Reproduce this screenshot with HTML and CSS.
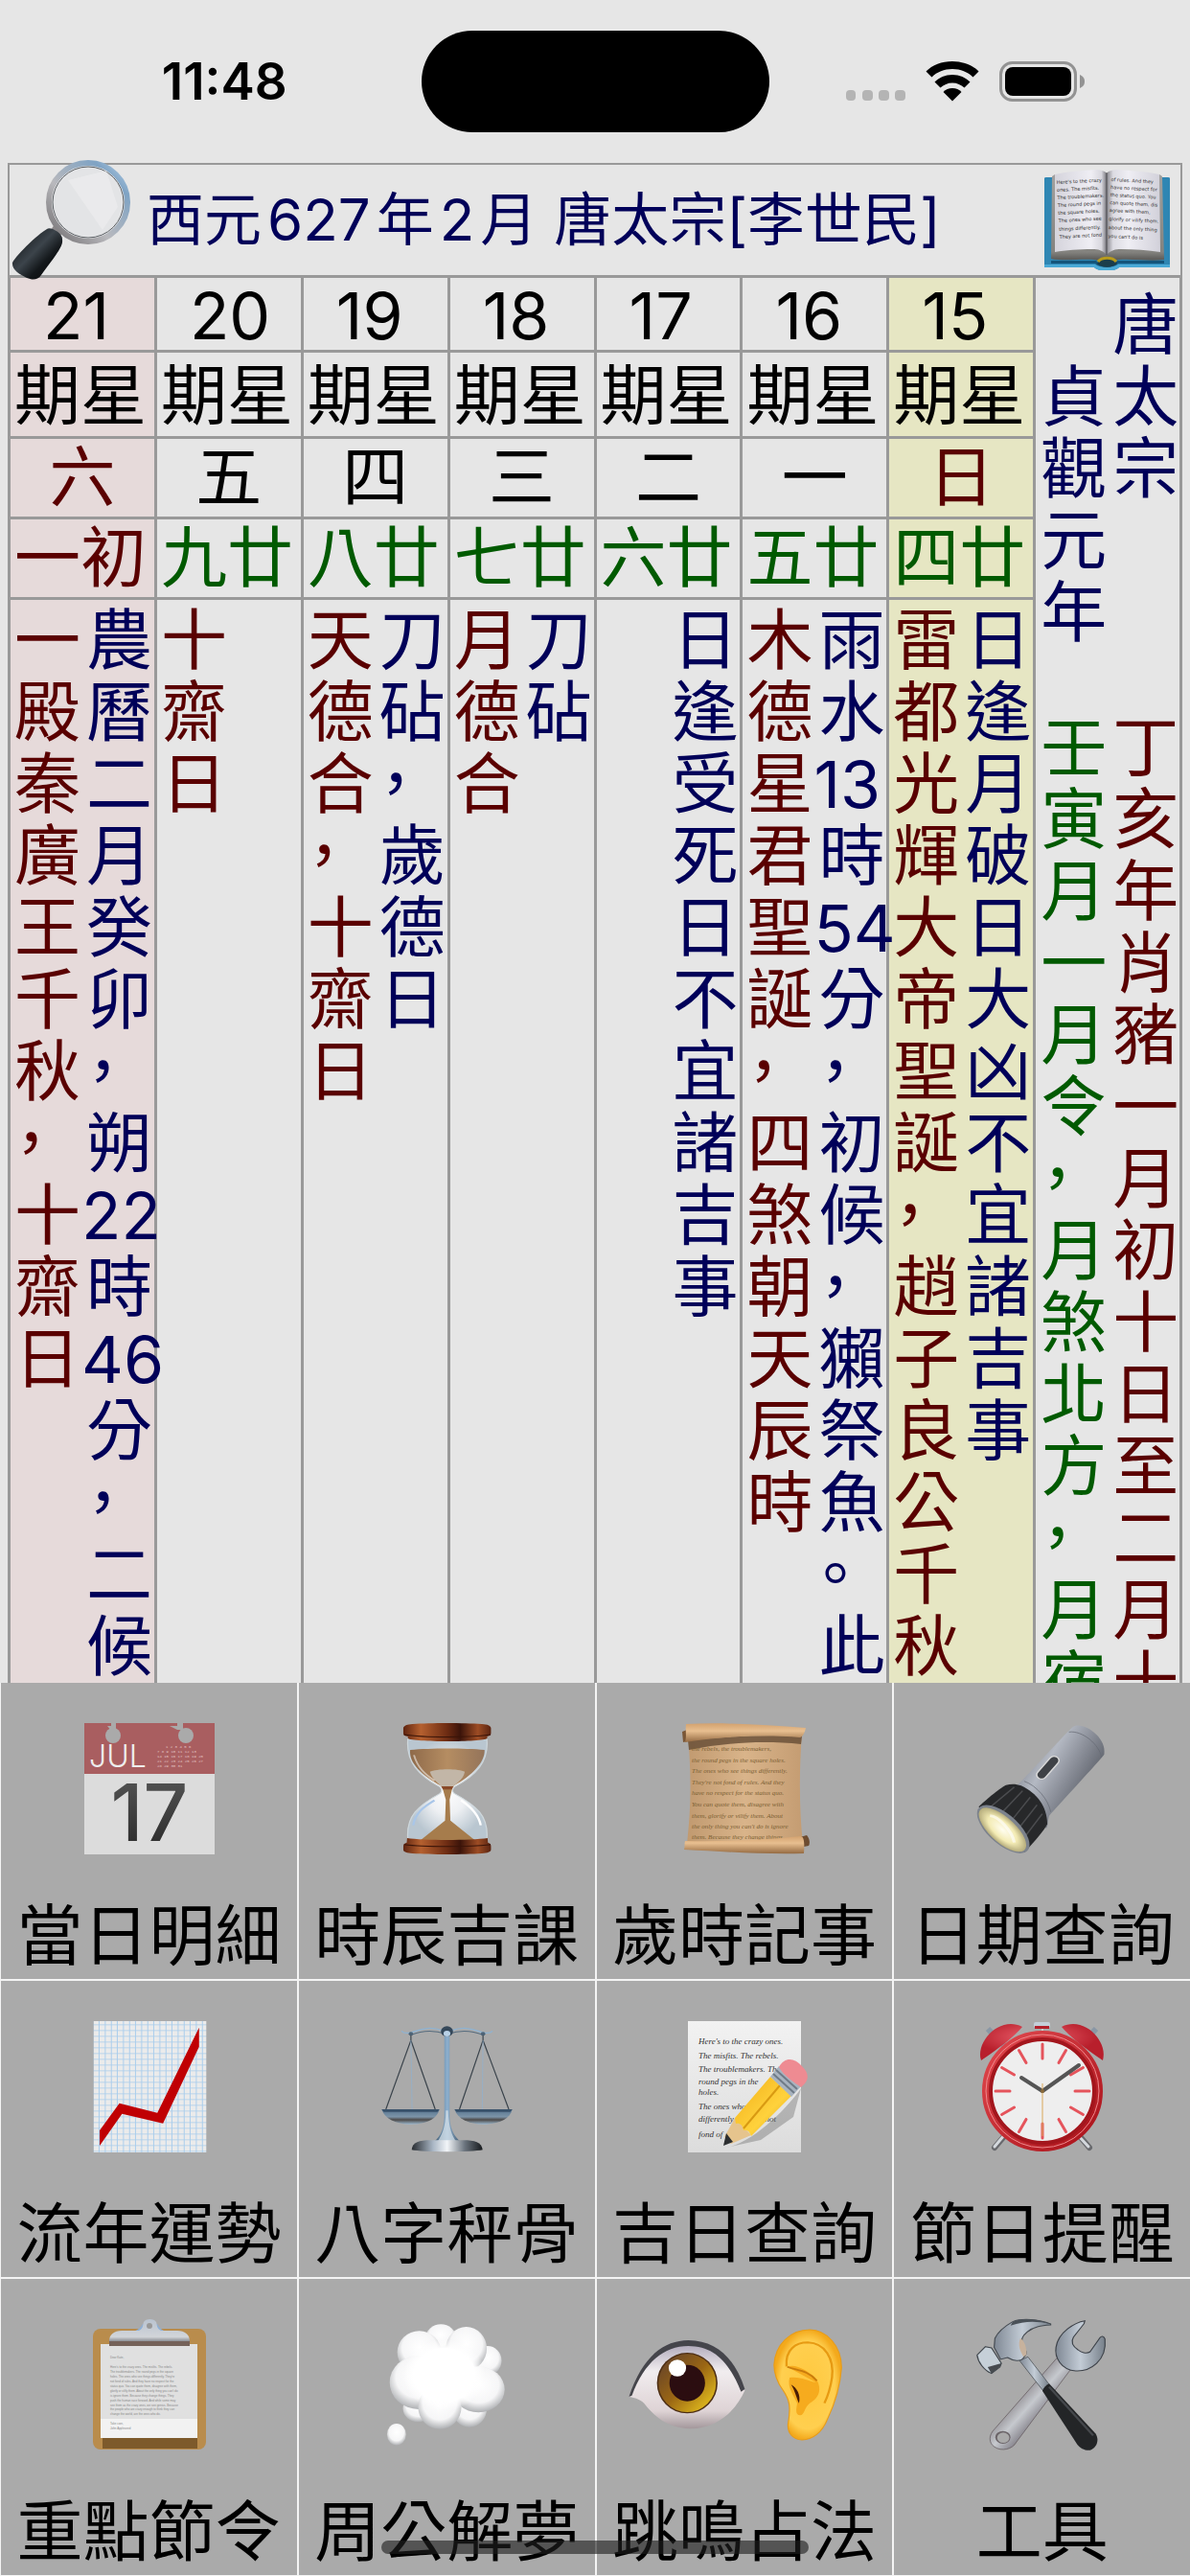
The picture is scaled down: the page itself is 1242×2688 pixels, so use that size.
FILE: index.html
```html
<!DOCTYPE html>
<html lang="zh-Hant">
<head>
<meta charset="utf-8">
<meta name="viewport" content="width=device-width, initial-scale=1">
<title>農民曆</title>
<link rel="stylesheet" href="styles.css">
</head>
<body>
<div class="app">
  <div class="status">
    <time class="clock">11:48</time>
    <div class="island"></div>
    <div class="signals">
      <svg class="dots" viewBox="0 0 62 12" aria-hidden="true"><g fill="#b4b4b4"><rect width="10" height="11" rx="4"/><rect x="17" width="11" height="11" rx="4"/><rect x="34" width="11" height="11" rx="4"/><rect x="51" width="11" height="11" rx="4"/></g></svg>
      <svg class="wifi" viewBox="0 0 56 42" aria-hidden="true"><path d="M28 0C39 0 49 4 55.500 10.500L49.500 16.500C44 11 36.500 8 28 8S12 11 6.500 16.500L.5 10.500C7 4 17 0 28 0z"/><path d="M28 14c7.500 0 14 3 18.500 7.500l-6 6C37 24.500 33 22.500 28 22.500s-9 2-12.500 5l-6-6C14 17 20.500 14 28 14z"/><path d="M28 28c4 0 7 1.500 9.500 4L28 41.500 18.500 32c2.500-2.500 5.500-4 9.500-4z"/></svg>
      <svg class="battery" viewBox="0 0 90 42" aria-hidden="true"><rect x="1.500" y="1.500" width="78" height="39" rx="12" fill="none" stroke="#939393" stroke-width="3"/><rect x="6" y="6" width="69" height="30" rx="8"/><path d="M84 14c4 2 5 4 5 7s-1 5-5 7z" fill="#939393"/></svg>
    </div>
  </div>

  <main class="calendar">
    <header class="titlebar">
      <button class="icon-button" aria-label="搜尋">
        <svg class="magnifier" viewBox="0 0 127 127">
          <defs>
            <linearGradient id="rim" x1="0" y1="1" x2="1" y2="0"><stop offset="0" stop-color="#6d6a6c"/><stop offset=".4" stop-color="#b9b9bd"/><stop offset=".8" stop-color="#7fa3c4"/><stop offset="1" stop-color="#b7d3ea"/></linearGradient>
            <linearGradient id="grip" x1="0" y1="0" x2="1" y2="1"><stop offset="0" stop-color="#050607"/><stop offset=".45" stop-color="#3c444b"/><stop offset=".65" stop-color="#14181b"/><stop offset="1" stop-color="#000"/></linearGradient>
          </defs>
          <path d="M42 74L50 62L58 70L51 82z" fill="#8b8789"/>
          <circle cx="81" cy="45" r="41" fill="#e3e4e6" stroke="url(#rim)" stroke-width="6"/>
          <circle cx="81" cy="45" r="37" fill="none" stroke="#5d6165" stroke-width="1"/>
          <path d="M60 22L100 12L112 50L96 74z" fill="#ededee" opacity=".7"/>
          <path d="M38 73C42 70 55 78 54 84C55 90 50 97 32 121C28 127 22 126 17 124C9 120 1 115 2 108C6 100 29 78 38 73z" fill="url(#grip)"/>
        </svg>
      </button>
      <h1>西元<span class="gap">627</span>年<span class="gap">2</span>月 唐太宗[李世民]</h1>
      <button class="icon-button" aria-label="書籍">
        <svg class="book" viewBox="0 0 131 105">
          <defs>
            <linearGradient id="pageL"><stop offset="0" stop-color="#d5d4dc"/><stop offset=".7" stop-color="#efeef4"/><stop offset=".9" stop-color="#d8d7de"/><stop offset="1" stop-color="#77767c"/></linearGradient>
            <linearGradient id="pageR"><stop offset="0" stop-color="#88878d"/><stop offset=".12" stop-color="#dcdbe2"/><stop offset=".4" stop-color="#efeef4"/><stop offset="1" stop-color="#d2d1da"/></linearGradient>
            <linearGradient id="block" x1="0" y1="0" x2="0" y2="1"><stop offset="0" stop-color="#a2a19f"/><stop offset=".88" stop-color="#84837f"/><stop offset="1" stop-color="#4c4b49"/></linearGradient>
          </defs>
          <path d="M0 9Q0 8 2 8H129Q131 8 131 9V102H78C73 107 57 107 52 102H0z" fill="#2f86b3"/>
          <path d="M0 99H53C58 103 72 103 77 99H131V102H78C73 107 57 107 52 102H0z" fill="#4aa9d6"/>
          <path d="M7 95H54C58 101 72 101 76 95H125V98H77C72 103 58 103 53 98H7z" fill="#14557b"/>
          <path d="M11 5L8 7L7 93C20 96 36 93 52 94C58 95 61 96 65 97C69 96 72 95 78 94C94 93 110 96 125 94L123 7L120 5z" fill="url(#block)"/>
          <path d="M55 98C58 91 73 91 76 98C71 103 60 103 55 98z" fill="#1b3d4c"/>
          <path d="M56 96C60 91 71 91 75 96" stroke="#b79a1c" stroke-width="3" fill="none"/>
          <path d="M11 5C24 2 42 1 52 0C58 0 63 1 65 4V89C61 84 56 83 50 83C36 83 22 84 11 86z" fill="url(#pageL)"/>
          <path d="M120 5C106 2 88 1 78 0C72 0 67 1 65 4V89C69 84 74 83 80 83C94 83 108 84 121 86z" fill="url(#pageR)"/>
          <path d="M65 3V89" stroke="#4d4c50" stroke-width="1"/>
          <g class="print" transform="rotate(-3 14 40)"><text x="14" y="15">Here's to the crazy</text><text x="14" y="23">ones. The misfits.</text><text x="14" y="31">The troublemakers.</text><text x="14" y="39">The round pegs in</text><text x="14" y="47">the square holes.</text><text x="14" y="55">The ones who see</text><text x="14" y="64">things differently.</text><text x="14" y="72">They are not fond</text></g>
          <g class="print" transform="rotate(3 68 40)"><text x="68" y="12">of rules. And they</text><text x="68" y="20">have no respect for</text><text x="68" y="28">the status quo. You</text><text x="68" y="36">can quote them, dis</text><text x="68" y="44">agree with them,</text><text x="68" y="53">glorify or vilify them.</text><text x="68" y="62">about the only thing</text><text x="68" y="71">you can't do is</text></g>
        </svg>
      </button>
    </header>

    <div class="pane">
    <table class="days">
      <tbody>
      <tr class="date">
        <th class="sat">21</th><th>20</th><th>19</th><th>18</th><th>17</th><th>16</th><th class="sun">15</th>
        <td class="era" rowspan="5">
          <div class="pair navy reign"><p>
貞
觀
元
年</p><p>唐
太
宗</p></div>
          <div class="pair"><p class="green">壬
寅
月
一
月
令
，
月
煞
北
方
，
月
宿</p><p class="red">丁
亥
年
肖
豬
一
月
初
十
日
至
二
月
十</p></div>
        </td>
      </tr>
      <tr class="week"><td class="sat">期星</td><td>期星</td><td>期星</td><td>期星</td><td>期星</td><td>期星</td><td class="sun">期星</td></tr>
      <tr class="weekday"><td class="sat red">六</td><td>五</td><td>四</td><td>三</td><td>二</td><td>一</td><td class="sun red">日</td></tr>
      <tr class="lunar"><td class="sat red">一初</td><td>九廿</td><td>八廿</td><td>七廿</td><td>六廿</td><td>五廿</td><td class="sun">四廿</td></tr>
      <tr class="notes">
        <td class="sat"><div class="pair"><p class="red">一
殿
秦
廣
王
千
秋
，
十
齋
日</p><p class="navy">農
曆
二
月
癸
卯
，
朔
<span class="num">22</span>
時
<span class="num">46</span>
分
，
二
候</p></div></td>
        <td><div class="pair"><p class="red">十
齋
日</p></div></td>
        <td><div class="pair"><p class="red">天
德
合
，
十
齋
日</p><p class="navy">刀
砧
，
歲
德
日</p></div></td>
        <td><div class="pair"><p class="red">月
德
合</p><p class="navy">刀
砧</p></div></td>
        <td><div class="pair"><p></p><p class="navy">日
逢
受
死
日
不
宜
諸
吉
事</p></div></td>
        <td><div class="pair"><p class="red">木
德
星
君
聖
誕
，
四
煞
朝
天
辰
時</p><p class="navy">雨
水
<span class="num">13</span>
時
<span class="num">54</span>
分
，
初
候
，
獺
祭
魚
。
此</p></div></td>
        <td class="sun"><div class="pair"><p class="red">雷
都
光
輝
大
帝
聖
誕
，
趙
子
良
公
千
秋</p><p class="navy">日
逢
月
破
日
大
凶
不
宜
諸
吉
事</p></div></td>
      </tr>
      </tbody>
    </table>
    </div>
  </main>

  <nav class="tools">
    <button>
      <svg class="icon" viewBox="0 0 137 137" aria-hidden="true">
        <defs><linearGradient id="ink" x1="0" y1="0" x2="0" y2="1"><stop offset="0" stop-color="#5a5a5a"/><stop offset="1" stop-color="#262626"/></linearGradient></defs>
        <rect x="1" width="136" height="53" fill="#a95e60"/>
        <rect x="1" y="53" width="136" height="84" fill="#dcdcdc"/>
        <g fill="#aaa"><circle cx="31" cy="13" r="8"/><path d="M29 0h5v8h-5l-4-5h4zM98 0h6v7h-6l-8-4h8z"/><circle cx="107" cy="13" r="8"/></g>
        <text class="jul" x="6" y="46">JUL</text>
        <g class="minical" xml:space="preserve"><text x="86" y="26">1  2  3  4  5  6</text><text x="77" y="31">7  8  9 10 11 12 13</text><text x="77" y="36">14 15 16 17 18 19 20</text><text x="77" y="41">21 22 23 24 25 26 27</text><text x="77" y="46">28 29 30 31</text></g>
        <text class="seventeen" x="69" y="123" fill="url(#ink)">17</text>
      </svg>
      <span>當日明細</span>
    </button>
    <button>
      <svg class="icon" viewBox="0 0 346 411" preserveAspectRatio="none" aria-hidden="true">
        <defs>
          <linearGradient id="wood"><stop offset="0" stop-color="#5e2410"/><stop offset=".2" stop-color="#b5602f"/><stop offset=".5" stop-color="#6d2c13"/><stop offset=".65" stop-color="#3c140a"/><stop offset=".85" stop-color="#9c4c24"/><stop offset="1" stop-color="#5a2411"/></linearGradient>
          <radialGradient id="glass"><stop offset="0" stop-color="#fff"/><stop offset=".5" stop-color="#eef0f3"/><stop offset="1" stop-color="#b9c6d0"/></radialGradient>
          <linearGradient id="sand"><stop offset="0" stop-color="#8f6a4a"/><stop offset=".5" stop-color="#b58d62"/><stop offset="1" stop-color="#94745a"/></linearGradient>
        </defs>
        <path d="M70 50H278C284 120 250 165 192 200C186 208 186 214 192 220C250 258 284 290 278 365H70C64 290 98 258 155 220C160 214 160 208 155 200C98 165 64 120 70 50z" fill="url(#glass)" stroke="#cfd8dc" stroke-width="3"/>
        <path d="M76 84C130 78 220 78 272 84C274 120 240 165 190 197C180 204 168 204 158 197C108 165 72 125 76 84z" fill="url(#sand)"/>
        <path d="M128 152C145 142 205 142 220 152C216 180 192 190 190 200H158C155 190 134 178 128 152z" fill="#c2b6a7"/>
        <path d="M160 198H188L180 240L182 305L246 366H104L168 305L170 240z" fill="#a67c4c"/>
        <path d="M158 198H190L186 208H162z" fill="#8a4a28"/>
        <path d="M86 100C96 140 115 160 140 180" stroke="#fff" stroke-width="5" fill="none" opacity=".5"/>
        <path d="M84 320C90 280 112 262 140 242" stroke="#a9c6e8" stroke-width="6" fill="none"/>
        <path d="M262 320C256 285 236 262 210 242" stroke="#fff" stroke-width="6" fill="none"/>
        <path d="M58 18C57 8 68 4 82 3C130-1 216-1 265 3C280 4 290 8 289 18V32C289 38 284 40 279 42V48C270 60 80 60 70 48V42C62 40 58 38 58 32z" fill="url(#wood)"/>
        <path d="M60 36C110 46 240 46 288 36" stroke="#3a1408" stroke-width="3" fill="none"/>
        <path d="M68 360C110 368 236 368 280 360L281 374C288 376 289 380 289 386V396C289 404 280 406 265 408C216 412 130 412 82 408C68 406 58 404 58 396V386C58 380 60 376 67 374z" fill="url(#wood)"/>
        <path d="M60 380C110 388 240 388 288 380" stroke="#3a1408" stroke-width="3" fill="none"/>
      </svg>
      <span>時辰吉課</span>
    </button>
    <button>
      <svg class="icon" viewBox="0 0 137 137" aria-hidden="true">
        <defs>
          <linearGradient id="parch"><stop offset="0" stop-color="#c19a70"/><stop offset=".5" stop-color="#d9b48a"/><stop offset="1" stop-color="#c49c72"/></linearGradient>
          <linearGradient id="roll" x1="0" y1="0" x2="0" y2="1"><stop offset="0" stop-color="#d3a26f"/><stop offset=".4" stop-color="#e8bf90"/><stop offset="1" stop-color="#946a42"/></linearGradient>
        </defs>
        <path d="M10 12C14 60 13 90 9 126H130C126 90 126 50 129 10z" fill="url(#parch)"/>
        <path d="M10 18C50 14 90 12 129 14L128 22C90 18 50 20 11 28z" fill="#5d4530" opacity=".75"/>
        <g class="script"><text x="14" y="29">the rebels, the troublemakers,</text><text x="14" y="41">the round pegs in the square holes.</text><text x="14" y="52">The ones who see things differently.</text><text x="14" y="64">They're not fond of rules. And they</text><text x="14" y="75">have no respect for the status quo.</text><text x="14" y="87">You can quote them, disagree with</text><text x="14" y="99">them, glorify or vilify them. About</text><text x="14" y="110">the only thing you can't do is ignore</text><text x="14" y="121">them. Because they change things.</text></g>
        <path d="M4 9L9 7L9 19L5 20z" fill="#7a5636"/>
        <path d="M8 1C50-1 90 2 133 5C132 10 130 14 127 15C90 11 45 14 7 20C9 12 7 8 8 1z" fill="url(#roll)"/>
        <path d="M127 119L134 117C138 122 137 126 136 128L131 129z" fill="#6d4c30"/>
        <path d="M7 123C45 124 90 122 128 118C131 119 132 124 131 136C85 137 45 134 6 132C7 129 6 126 7 123z" fill="url(#roll)"/>
      </svg>
      <span>歲時記事</span>
    </button>
    <button>
      <svg class="icon" viewBox="0 0 346 411" preserveAspectRatio="none" aria-hidden="true">
        <defs>
          <linearGradient id="tube" x1="0" y1="0" x2="1" y2=".7"><stop offset=".1" stop-color="#71757f"/><stop offset=".4" stop-color="#b4b9c3"/><stop offset=".6" stop-color="#8e929c"/><stop offset=".95" stop-color="#4d515a"/></linearGradient>
          <radialGradient id="bulb"><stop offset="0" stop-color="#fffdf0"/><stop offset=".6" stop-color="#f3ebb4"/><stop offset="1" stop-color="#b5ac7c"/></radialGradient>
        </defs>
        <path d="M105 198C125 178 240 25 255 12C278-8 345 42 337 98C325 118 215 258 192 290C188 306 190 320 184 330z" fill="url(#tube)"/>
        <path d="M244 28C280 22 325 68 330 108" stroke="#666a74" stroke-width="2" fill="none"/>
        <path d="M126 182C160 196 190 240 196 278" stroke="#676b75" stroke-width="2" fill="none"/>
        <path d="M78 194C92 190 105 190 118 196C160 220 186 260 187 316C180 335 150 375 128 404L6 262C20 245 60 205 78 194z" fill="#27282a"/>
        <path d="M100 200L38 262M122 212L66 282M142 232L92 306M160 256L110 332M174 284L124 362" stroke="#4b4c4f" stroke-width="4"/>
        <ellipse cx="71" cy="332" rx="93" ry="43" transform="rotate(49 71 332)" fill="#7c828c"/>
        <ellipse cx="69" cy="334" rx="86" ry="36" transform="rotate(49 69 334)" fill="url(#bulb)"/>
        <path d="M36 290C58 292 94 336 100 374" stroke="#fff" stroke-width="8" fill="none" opacity=".6"/>
        <path d="M172 162L205 117" stroke="#d8d8d8" stroke-width="30" stroke-linecap="round"/>
        <path d="M172 162L205 117" stroke="#3e4146" stroke-width="22" stroke-linecap="round"/>
      </svg>
      <span>日期查詢</span>
    </button>

    <button>
      <svg class="icon" viewBox="0 0 346 411" preserveAspectRatio="none" aria-hidden="true">
        <defs><pattern id="grid" width="16" height="18" patternUnits="userSpaceOnUse" x="27" y="10"><rect width="16" height="18" fill="#ebebeb"/><path d="M15 0V18M0 1H16" stroke="#a9cdec" stroke-width="3"/></pattern></defs>
        <rect x="27" width="297" height="411" fill="url(#grid)"/>
        <path d="M43 390V342L95 257L195 287L305 20V80L210 320L102 290z" fill="#c00003"/>
      </svg>
      <span>流年運勢</span>
    </button>
    <button>
      <svg class="icon" viewBox="0 0 346 411" preserveAspectRatio="none" aria-hidden="true">
        <defs>
          <linearGradient id="post"><stop offset="0" stop-color="#3b556b"/><stop offset=".5" stop-color="#8db0cf"/><stop offset="1" stop-color="#42586b"/></linearGradient>
          <linearGradient id="pan" x1="0" y1="0" x2="0" y2="1"><stop offset="0" stop-color="#54728d"/><stop offset=".5" stop-color="#7c94a8"/><stop offset=".7" stop-color="#4d4a49"/><stop offset="1" stop-color="#9ab6cc"/></linearGradient>
          <linearGradient id="foot"><stop offset="0" stop-color="#272b30"/><stop offset=".3" stop-color="#a9b6c4"/><stop offset=".5" stop-color="#f2f5f8"/><stop offset=".75" stop-color="#6a737d"/><stop offset="1" stop-color="#16191c"/></linearGradient>
        </defs>
        <path d="M53 31C70 50 100 20 130 22C150 22 160 30 173 34C186 30 196 22 216 22C246 20 276 50 293 31" stroke="#8fb3d2" stroke-width="4" fill="none"/>
        <path d="M78 43C110 28 140 28 170 40M176 40C206 28 236 28 268 43" stroke="#566b7d" stroke-width="3" fill="none"/>
        <circle cx="78" cy="40" r="6" fill="#4e6477"/><circle cx="268" cy="40" r="6" fill="#4e6477"/>
        <path d="M166 48H180V300C181 335 190 360 210 378H138C158 360 165 335 166 300z" fill="url(#post)"/>
        <path d="M170 280C170 335 158 360 148 378H198C186 360 178 335 176 280z" fill="#d9e2ea" opacity=".7"/>
        <circle cx="173" cy="32" r="16" fill="#35485a"/><circle cx="173" cy="39" r="9" fill="#b8d0e6"/>
        <path d="M78 44V60L12 276M78 60L142 276M268 44V60L206 276M268 60L336 276" stroke="#3b444c" stroke-width="3" fill="none"/>
        <path d="M78 60L81 276M268 60L266 276" stroke="#8fb1cf" stroke-width="2"/>
        <path d="M1 276H153C148 305 118 323 78 323S8 305 1 276z" fill="url(#pan)"/><path d="M1 276H153L148 284H6z" fill="#38516a"/>
        <path d="M193 276H345C340 305 310 323 270 323S200 305 193 276z" fill="url(#pan)"/><path d="M193 276H345L340 284H198z" fill="#38516a"/>
        <path d="M80 403C82 378 100 373 130 373H216C246 373 264 378 267 403C240 411 106 411 80 403z" fill="url(#foot)"/>
      </svg>
      <span>八字秤骨</span>
    </button>
    <button>
      <svg class="icon" viewBox="0 0 137 137" aria-hidden="true">
        <defs><linearGradient id="sheet" x1="0" y1="0" x2="0" y2="1"><stop offset="0" stop-color="#f2f2f2"/><stop offset="1" stop-color="#dcdcdc"/></linearGradient><linearGradient id="yellow" x1="0" y1="0" x2="1" y2="1"><stop offset="0" stop-color="#d99a12"/><stop offset=".3" stop-color="#f8c02a"/><stop offset=".6" stop-color="#ffd23c"/><stop offset="1" stop-color="#d99c10"/></linearGradient></defs>
        <rect x="10" width="118" height="137" fill="url(#sheet)"/>
        <g class="hand"><text x="21" y="24">Here's to the crazy ones.</text><text x="21" y="39">The misfits. The rebels.</text><text x="21" y="53">The troublemakers. The</text><text x="21" y="66">round pegs in the</text><text x="21" y="77">holes.</text><text x="21" y="92">The ones who see</text><text x="21" y="105">differently. They're not</text><text x="21" y="121">fond of</text></g>
        <path d="M50 132C80 126 116 88 128 70L120 100L86 124z" fill="#777" opacity=".45"/>
        <path d="M48 121L59 101L76 119L55 128z" fill="#e6c48d"/>
        <path d="M50 117L57 126L47 130z" fill="#2d2f31"/>
        <path d="M59 101L96 58L118 78L76 120C74 115 72 113 68 114C67 108 64 106 60 107z" fill="url(#yellow)"/>
        <path d="M68 112L106 67" stroke="#d99a12" stroke-width="2"/>
        <path d="M96 58L105 47L128 68L118 79z" fill="#a8b3bf"/>
        <path d="M99 55L121 75M102 51L124 71" stroke="#6f7b87" stroke-width="2"/>
        <path d="M105 48C111 37 121 38 129 47C137 55 137 62 128 69C121 64 110 57 105 48z" fill="#ee8b92"/>
      </svg>
      <span>吉日查詢</span>
    </button>
    <button>
      <svg class="icon" viewBox="0 0 137 137" aria-hidden="true">
        <defs><radialGradient id="bell" cx=".45" cy=".35"><stop offset="0" stop-color="#ef6470"/><stop offset="1" stop-color="#b81f2c"/></radialGradient><linearGradient id="case" x1="0" y1="0" x2="1" y2="1"><stop offset="0" stop-color="#e2494f"/><stop offset="1" stop-color="#a81119"/></linearGradient></defs>
        <path d="M30 119L19 132M107 119L118 132" stroke="#68696d" stroke-width="6" stroke-linecap="round"/>
        <path d="M29 119L19 131M106 119L117 131" stroke="#d4d8dd" stroke-width="3" stroke-linecap="round"/>
        <path d="M12 8L33 30M125 8L104 30" stroke="#8997a5" stroke-width="6"/>
        <path d="M69 6V18" stroke="#ccc" stroke-width="2"/><rect x="60" y="1" width="17" height="6" rx="2" fill="#c4ced8"/><path d="M61 5h15v3H61z" fill="#b3202b"/>
        <path d="M5 41C-1 22 24-6 48 6C40 16 24 28 5 41zM132 41C138 22 113-6 89 6C97 16 113 28 132 41z" fill="url(#bell)"/>
        <circle cx="69" cy="73" r="59" fill="none" stroke="url(#case)" stroke-width="8"/>
        <circle cx="69" cy="73" r="54" fill="#eee" stroke="#a3161d" stroke-width="4"/>
        <circle cx="69" cy="73" r="59" fill="none" stroke="#f08a8d" stroke-width="1"/>
        <g id="ticks" stroke="#e5545c" stroke-width="3" stroke-linecap="round"><path d="M69 24V39M69 107V122M20 73H35M103 73H118"/><path d="M69 24V39M69 107V122M20 73H35M103 73H118" transform="rotate(30 69 73)"/><path d="M69 24V39M69 107V122M20 73H35M103 73H118" transform="rotate(60 69 73)"/></g>
        <path d="M69 73L47 59M69 73L107 46" stroke="#555" stroke-width="4" stroke-linecap="round"/>
        <path d="M69 65V120" stroke="#d9a85b" stroke-width="1"/><circle cx="69" cy="73" r="2" fill="#8a6a3a"/>
      </svg>
      <span>節日提醒</span>
    </button>

    <button>
      <svg class="icon" viewBox="0 0 137 137" aria-hidden="true">
        <defs><linearGradient id="clip" x1="0" y1="0" x2="0" y2="1"><stop offset="0" stop-color="#b9c3d0"/><stop offset=".8" stop-color="#d2d5d9"/><stop offset="1" stop-color="#8d9096"/></linearGradient></defs>
        <rect x="10" y="10" width="118" height="126" rx="8" fill="#b98c4c"/>
        <rect x="20" y="112" width="99" height="23" fill="#7d5a2b"/>
        <rect x="18" y="26" width="101" height="98" fill="#e0e0e0"/>
        <rect x="18" y="104" width="101" height="20" fill="#f2f2f2"/>
        <path d="M27 22H111V28H27z" fill="#75625a"/>
        <path d="M50 13C58 12 60 8 62 5H77C79 8 81 12 88 13z" fill="#8fb0d6"/>
        <path d="M27 23C27 16 32 12 40 12H58C63 10 62 5 63 3C65-1 74-1 76 3C77 5 76 10 81 12H98C106 12 111 16 111 23z" fill="url(#clip)"/>
        <circle cx="69" cy="7" r="3" fill="#999"/>
        <g class="tiny"><text x="28" y="41">Dear Kate,</text><text x="28" y="51">Here's to the crazy ones. The misfits. The rebels.</text><text x="28" y="56">The troublemakers. The round pegs in the square</text><text x="28" y="61">holes. The ones who see things differently. They're</text><text x="28" y="66">not fond of rules. And they have no respect for the</text><text x="28" y="71">status quo. You can quote them, disagree with them,</text><text x="28" y="76">glorify or vilify them. About the only thing you can't do</text><text x="28" y="81">is ignore them. Because they change things. They</text><text x="28" y="86">push the human race forward. And while some may</text><text x="28" y="91">see them as the crazy ones, we see genius. Because</text><text x="28" y="95">the people who are crazy enough to think they can</text><text x="28" y="100">change the world, are the ones who do.</text><text x="28" y="110">Take care,</text><text x="28" y="115">John Appleseed</text></g>
      </svg>
      <span>重點節令</span>
    </button>
    <button>
      <svg class="icon" viewBox="0 0 346 411" preserveAspectRatio="none" aria-hidden="true">
        <defs><radialGradient id="puff" cx=".5" cy=".4" r=".6"><stop offset="0" stop-color="#fff"/><stop offset=".65" stop-color="#f6f6f7"/><stop offset="1" stop-color="#aeb0b3"/></radialGradient><radialGradient id="core"><stop offset="0" stop-color="#fff"/><stop offset=".75" stop-color="#fff"/><stop offset="1" stop-color="#fff" stop-opacity="0"/></radialGradient></defs>
        <g fill="url(#puff)">
          <ellipse cx="157" cy="58" rx="40" ry="42"/><ellipse cx="280" cy="130" rx="37" ry="46"/>
          <ellipse cx="97" cy="280" rx="40" ry="42"/><ellipse cx="232" cy="280" rx="46" ry="58"/>
          <ellipse cx="100" cy="103" rx="58" ry="66"/><ellipse cx="224" cy="92" rx="54" ry="68"/>
          <ellipse cx="98" cy="198" rx="76" ry="84"/><ellipse cx="256" cy="220" rx="69" ry="72"/>
          <ellipse cx="154" cy="275" rx="57" ry="69"/><ellipse cx="40" cy="361" rx="25" ry="34"/>
        </g>
        <ellipse cx="166" cy="175" rx="108" ry="112" fill="url(#core)"/>
      </svg>
      <span>周公解夢</span>
    </button>
    <button>
      <svg class="icon wide" viewBox="82 147 622 411" preserveAspectRatio="none" aria-hidden="true">
        <defs>
          <linearGradient id="white" x1="0" y1="0" x2="0" y2="1"><stop offset="0" stop-color="#a79fb3"/><stop offset=".35" stop-color="#f1edef"/><stop offset=".8" stop-color="#ded3d5"/><stop offset="1" stop-color="#a3979b"/></linearGradient>
          <linearGradient id="iris" x1="0" y1="0" x2="1" y2="1"><stop offset="0" stop-color="#5d3d2c"/><stop offset=".5" stop-color="#9a6614"/><stop offset=".85" stop-color="#d9b21c"/></linearGradient>
          <radialGradient id="ear"><stop offset="0" stop-color="#ffc83e"/><stop offset=".8" stop-color="#ffcf4f"/><stop offset="1" stop-color="#f3a91c"/></radialGradient>
        </defs>
        <path d="M88 390C130 262 180 214 245 213C320 214 365 270 394 370C372 430 325 488 250 490C185 485 155 450 128 410C115 396 100 392 88 390z" fill="url(#white)"/>
        <path d="M88 390C125 262 180 214 245 213C320 214 368 270 394 366L384 374C350 275 310 232 245 231C180 232 130 280 96 386z" fill="#45454b"/>
        <ellipse cx="242" cy="347" rx="80" ry="95" fill="#4d2e14"/><ellipse cx="242" cy="347" rx="76" ry="91" fill="url(#iris)"/>
        <ellipse cx="242" cy="347" rx="47" ry="57" fill="#2b0d10"/><ellipse cx="216" cy="300" rx="23" ry="26" fill="#fff"/>
        <path d="M565 180C610 180 650 232 649 300C646 350 636 400 612 460C598 502 572 525 545 525C520 524 506 502 508 475C516 420 512 400 495 370C480 345 471 320 471 290C474 225 515 180 565 180z" fill="url(#ear)" stroke="#e79c1a" stroke-width="3"/>
        <path d="M504 295C500 240 530 220 560 220C606 222 630 270 624 330C620 362 612 390 604 410" stroke="#e79a12" stroke-width="6" fill="none"/>
        <path d="M506 296C530 285 560 310 580 330C600 365 590 395 565 410C550 425 552 446 540 448C526 446 530 428 532 410C520 380 506 360 512 330C540 325 560 340 582 345" fill="#f6ab1e"/>
        <path d="M506 296C530 308 560 305 584 340" stroke="#c97b0c" stroke-width="5" fill="none"/>
        <path d="M516 352C532 362 542 385 537 410C530 395 528 375 516 352z" fill="#4a1d05"/>
      </svg>
      <span>跳鳴占法</span>
    </button>
    <button>
      <svg class="icon" viewBox="0 0 346 411" preserveAspectRatio="none" aria-hidden="true">
        <defs>
          <linearGradient id="steel"><stop offset="0" stop-color="#7f8894"/><stop offset=".5" stop-color="#c3ccd6"/><stop offset="1" stop-color="#767f89"/></linearGradient>
          <linearGradient id="shaft" x1="0" y1="0" x2="1" y2="1"><stop offset=".3" stop-color="#726b70"/><stop offset=".5" stop-color="#c6c9ce"/><stop offset=".7" stop-color="#65606a"/></linearGradient>
        </defs>
        <path d="M212 122L252 152L106 384C96 408 66 415 48 400C32 388 32 362 48 344z" fill="url(#shaft)" stroke="#62585d" stroke-width="2"/>
        <circle cx="70" cy="370" r="20" fill="#6b6468"/><circle cx="71" cy="371" r="16" fill="#aaa"/>
        <path d="M286 5C260 10 216 40 210 88C206 118 222 158 262 162C300 164 345 130 339 62C336 52 330 52 326 58L300 102C290 110 276 104 268 96C256 86 248 72 256 56L284 14z" fill="url(#steel)" stroke="#3e434a" stroke-width="3"/>
        <path d="M114 130L136 118L192 204L176 224z" fill="url(#steel)" stroke="#454a50" stroke-width="2"/>
        <path d="M174 224C178 214 184 206 192 202L314 358C326 380 316 404 300 410C286 412 274 404 266 392z" fill="#232527"/>
        <path d="M192 212L308 364" stroke="#45484c" stroke-width="6"/>
        <path d="M196 15C164 0 120-4 96 8C78 20 58 38 49 60L47 88L64 126L82 120C96 130 118 136 126 118C136 108 130 92 122 82C116 60 124 50 134 40C152 22 172 20 196 18z" fill="url(#steel)" stroke="#454b52" stroke-width="3"/>
        <path d="M196 15C160-2 118-4 96 8L90 20C130 4 160 6 196 15z" fill="#4a5158"/>
        <path d="M24 86L40 90L66 138L62 150L40 170C20 160 4 134 2 112z" fill="#c6d0d8" stroke="#3f454b" stroke-width="3"/>
        <path d="M66 138L62 150L40 170L30 150z" fill="#474b50"/>
        <path d="M116 60C126 66 134 90 132 112L124 118C116 100 108 80 116 60z" fill="#c7b29d"/>
      </svg>
      <span>工具</span>
    </button>
  </nav>
  <div class="home-bar"></div>
</div>
</body>
</html>
```
FILE: styles.css
```css
:root {
  --paper: #e6e6e6;
  --line: #999;
  --navy: #000059;
  --red: #5a0000;
  --green: #005a00;
}

* { box-sizing: border-box; }

body {
  margin: 0;
  background: var(--paper);
  color: #000;
  font-family: Inter, "Noto Sans CJK TC", sans-serif;
  font-weight: 400;
}

.app {
  position: relative;
  display: flex;
  flex-direction: column;
  height: 100vh;
}

button {
  margin: 0;
  padding: 0;
  border: 0;
  background: none;
  color: inherit;
  font: inherit;
}

svg { display: block; }

/* status bar */
.status {
  display: grid;
  grid-template-columns: 1fr 363px 1fr;
  align-items: center;
  padding: 32px 0;
}

.clock {
  padding-left: 29px;
  text-align: center;
  font-size: 53px;
  font-weight: 600;
}

.island {
  height: 106px;
  border-radius: 53px;
  background: #000;
}

.signals {
  display: flex;
  align-items: flex-end;
  justify-content: center;
  gap: 21px;
  padding-right: 29px;
}

.dots { width: 62px; height: 12px; }
.wifi { width: 56px; height: 42px; }
.battery { width: 90px; height: 42px; }

/* calendar */
.calendar {
  display: flex;
  flex: 1;
  flex-direction: column;
  min-height: 0;
  margin: 0 8px;
}

.pane {
  flex: 1;
  min-height: 0;
  overflow: hidden;
}

.titlebar {
  position: relative;
  display: flex;
  flex: none;
  align-items: center;
  height: 117px;
  padding: 0 11px 0 1px;
  border: 2px solid var(--line);
  border-bottom: 0;
}

.titlebar h1 {
  flex: 1;
  margin: 0;
  padding-left: 15px;
  color: var(--navy);
  font-size: 60px;
  font-weight: 400;
  line-height: 75px;
  white-space: nowrap;
}

.gap { margin: 0 6px; }

.magnifier { width: 127px; height: 127px; }
.book { width: 131px; height: 105px; }
.print { font: 5px "DejaVu Sans", sans-serif; fill: #333; }

.days {
  width: 100%;
  border-collapse: collapse;
  table-layout: fixed;
  font-size: 69px;
}

.days th,
.days td {
  padding: 0;
  border: 3px solid var(--line);
  text-align: center;
  font-weight: 400;
  white-space: nowrap;
}

.days .date th {
  padding: 4px 0 0 34px;
  text-align: left;
  font-size: 68px;
  line-height: 71px;
}

.days .week td { padding: 4px 0 0 4px; line-height: 83px; text-align: left; }
.weekday td { line-height: 81px; }
.days .lunar td { padding-left: 4px; line-height: 81px; text-align: left; color: var(--green); }
.sat { background: #e6dada; }
.sun { background: #e6e6c3; }

.days .navy { color: var(--navy); }
.days .red, .days .lunar .red { color: var(--red); }
.days .green { color: var(--green); }

.days .notes td { padding: 5px 0 60px 4px; vertical-align: top; }
.days .era { padding: 12px 0 0 5px; vertical-align: top; }
.reign { height: 441px; }

.pair {
  display: grid;
  grid-template-columns: 75px 75px;
  text-align: left;
  line-height: 75px;
  font-feature-settings: "halt";
}

.pair p { margin: 0; white-space: pre; }
.num { margin-left: -5px; font-size: 68px; line-height: 0; }

/* tool buttons */
.tools {
  display: grid;
  grid-template-columns: repeat(4, 1fr);
  gap: 2px;
  padding: 0 0 1px 1px;
  background: #f4f4f4;
}

.tools button {
  display: flex;
  flex-direction: column;
  align-items: center;
  gap: 48px;
  padding: 42px 0 7px;
  background: #aaa;
  font-size: 69px;
  line-height: 75px;
}

.icon { width: 137px; height: 137px; overflow: visible; }
.wide { width: 246px; }

.jul { font: 300 32px Inter, sans-serif; fill: #eee; }
.seventeen { font: 500 82px Inter, sans-serif; text-anchor: middle; }
.minical { font: 4px "Liberation Mono", monospace; fill: #e2c4c4; white-space: pre; }
.script { font: italic 7px "Liberation Serif", serif; fill: #7b6033; }
.hand { font: italic 9px "Liberation Serif", serif; fill: #333; }
.tiny { font: 3px "Liberation Sans", sans-serif; fill: #888; }

.home-bar {
  position: absolute;
  left: 50%;
  bottom: 23px;
  width: 446px;
  height: 14px;
  margin-left: -223px;
  border-radius: 7px;
  background: rgba(30, 30, 30, .62);
}
```
